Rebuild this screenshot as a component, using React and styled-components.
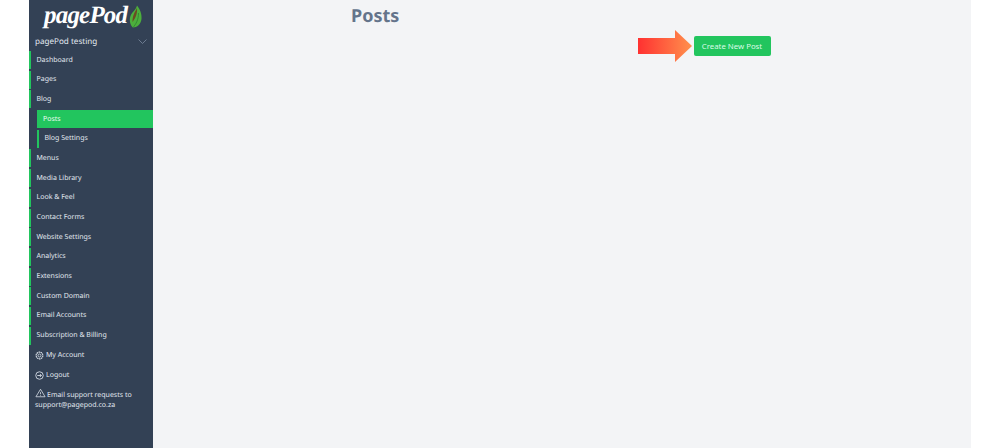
import React from 'react';
import styled, { createGlobalStyle } from 'styled-components';

const Global = createGlobalStyle`
  html, body { margin: 0; padding: 0; background: #fff; }
  body { font-family: "Noto Sans", "Open Sans", sans-serif; text-rendering: geometricPrecision; }
`;

const Shell = styled.div`
  display: flex;
  width: 941.5px;
  height: 448px;
  margin-left: 29px;
  background: #f3f4f6;
  overflow: hidden;
`;

const Sidebar = styled.aside`
  width: 123.5px;
  flex-shrink: 0;
  background: #334155;
  color: #e2e8f0;
  font-size: 7px;
`;

const LogoRow = styled.div`
  display: flex;
  align-items: center;
  gap: 2px;
  height: 32px;
  padding-left: 15px;
`;

const LogoText = styled.span`
  font-family: "Liberation Serif", serif;
  font-style: italic;
  font-weight: 700;
  font-size: 25px;
  letter-spacing: -0.8px;
  color: #fff;
`;

const SiteRow = styled.div`
  display: flex;
  align-items: center;
  justify-content: space-between;
  height: 19px;
  padding: 0 5.5px 0 6px;
  font-size: 8.1px;
  color: #e2e8f0;
`;

const Item = styled.div`
  display: flex;
  align-items: center;
  height: 18px;
  margin-bottom: 1.7px;
  padding-left: ${(p) => (p.$active ? '6px' : '5.5px')};
  margin-left: ${(p) => (p.$sub ? '8px' : '0')};
  border-left: ${(p) => (p.$active ? '0' : '2.5px solid #22c55e')};
  background: ${(p) => (p.$active ? '#22c55e' : 'transparent')};
  color: ${(p) => (p.$active ? '#f0fdf4' : '#e2e8f0')};
  white-space: nowrap;
`;

const Plain = styled.div`
  display: flex;
  align-items: center;
  gap: 2px;
  height: 18px;
  margin-bottom: 1.7px;
  padding-left: 6px;
`;

const Note = styled.div`
  padding: 2.5px 6px 0;
  line-height: 9.6px;
`;

const NoteIcon = styled.svg`
  width: 11px;
  height: 10px;
  vertical-align: -1px;
  margin-right: 1px;
`;

const Main = styled.main`
  flex: 1;
  padding: 6px 200px 0 198.5px;
`;

const Title = styled.h1`
  margin: 0;
  font-size: 18px;
  line-height: 21px;
  font-weight: 700;
  color: #64748b;
`;

const Actions = styled.div`
  display: flex;
  align-items: center;
  justify-content: flex-end;
  gap: 2px;
  margin-top: 3px;
`;

const Button = styled.button`
  width: 77px;
  height: 20px;
  padding: 0;
  border: 0;
  border-radius: 2px;
  background: #22c55e;
  color: #dcfce7;
  font-family: inherit;
  font-size: 7.8px;
`;

const menuTop = ['Dashboard', 'Pages', 'Blog'];
const menuRest = [
  'Menus', 'Media Library', 'Look & Feel', 'Contact Forms', 'Website Settings', 'Analytics',
  'Extensions', 'Custom Domain', 'Email Accounts', 'Subscription & Billing',
];

const Leaf = () => (
  <svg width="13" height="23" viewBox="0 0 13 23">
    <path d="M8 0.5C11 4 13 9 12.5 14C12 19 8 22.5 4 22.5C1 20 0 15 1.5 11C3 7 7 5 8 0.5Z" fill="#4caf3c" />
    <path d="M8 3C6 7 3.5 10 3.5 17C6.5 13 8.5 9 8 3Z" fill="#6b4a22" />
    <path d="M4 22.5C7 19 9.5 15 9.5 8" fill="none" stroke="#2e7d32" strokeWidth="0.8" />
  </svg>
);

const Chevron = () => (
  <svg width="9" height="5" viewBox="0 0 9 5" fill="none" stroke="#7c8aa0" strokeWidth="0.8">
    <path d="M0.5 0.5L4.5 4.5L8.5 0.5" />
  </svg>
);

const Gear = () => (
  <svg width="9" height="9" viewBox="0 0 24 24" fill="none" stroke="#e2e8f0" strokeWidth="2">
    <circle cx="12" cy="12" r="4" />
    <circle cx="12" cy="12" r="9" strokeDasharray="4 1.5" strokeWidth="3" />
  </svg>
);

const LogoutIcon = () => (
  <svg width="9" height="9" viewBox="0 0 24 24" fill="none" stroke="#e2e8f0" strokeWidth="2.2">
    <circle cx="12" cy="12" r="10" />
    <path d="M6 12H17M13 8L17 12L13 16" />
  </svg>
);

const Arrow = () => (
  <svg width="54" height="32" viewBox="0 0 54 32">
    <defs>
      <linearGradient id="arrowFill" x1="0" x2="1" y1="0" y2="0">
        <stop offset="0" stopColor="#ff3131" />
        <stop offset="1" stopColor="#ff914d" />
      </linearGradient>
    </defs>
    <path d="M0 8H37V0L54 16L37 32V24H0Z" fill="url(#arrowFill)" />
  </svg>
);

export default function App() {
  return (
    <>
      <Global />
      <Shell>
        <Sidebar>
          <LogoRow>
            <LogoText>pagePod</LogoText>
            <Leaf />
          </LogoRow>
          <SiteRow>
            pagePod testing
            <Chevron />
          </SiteRow>
          {menuTop.map((m) => (
            <Item key={m}>{m}</Item>
          ))}
          <Item $sub $active>Posts</Item>
          <Item $sub>Blog Settings</Item>
          {menuRest.map((m) => (
            <Item key={m}>{m}</Item>
          ))}
          <Plain><Gear /> My Account</Plain>
          <Plain><LogoutIcon /> Logout</Plain>
          <Note>
            <NoteIcon viewBox="0 0 24 24" fill="none" stroke="#e2e8f0" strokeWidth="1.8">
              <path d="M12 3L23 21H1Z" />
              <path d="M12 10V15M12 17V18.5" />
            </NoteIcon>
            Email support requests to support@pagepod.co.za
          </Note>
        </Sidebar>
        <Main>
          <Title>Posts</Title>
          <Actions>
            <Arrow />
            <Button>Create New Post</Button>
          </Actions>
        </Main>
      </Shell>
    </>
  );
}
